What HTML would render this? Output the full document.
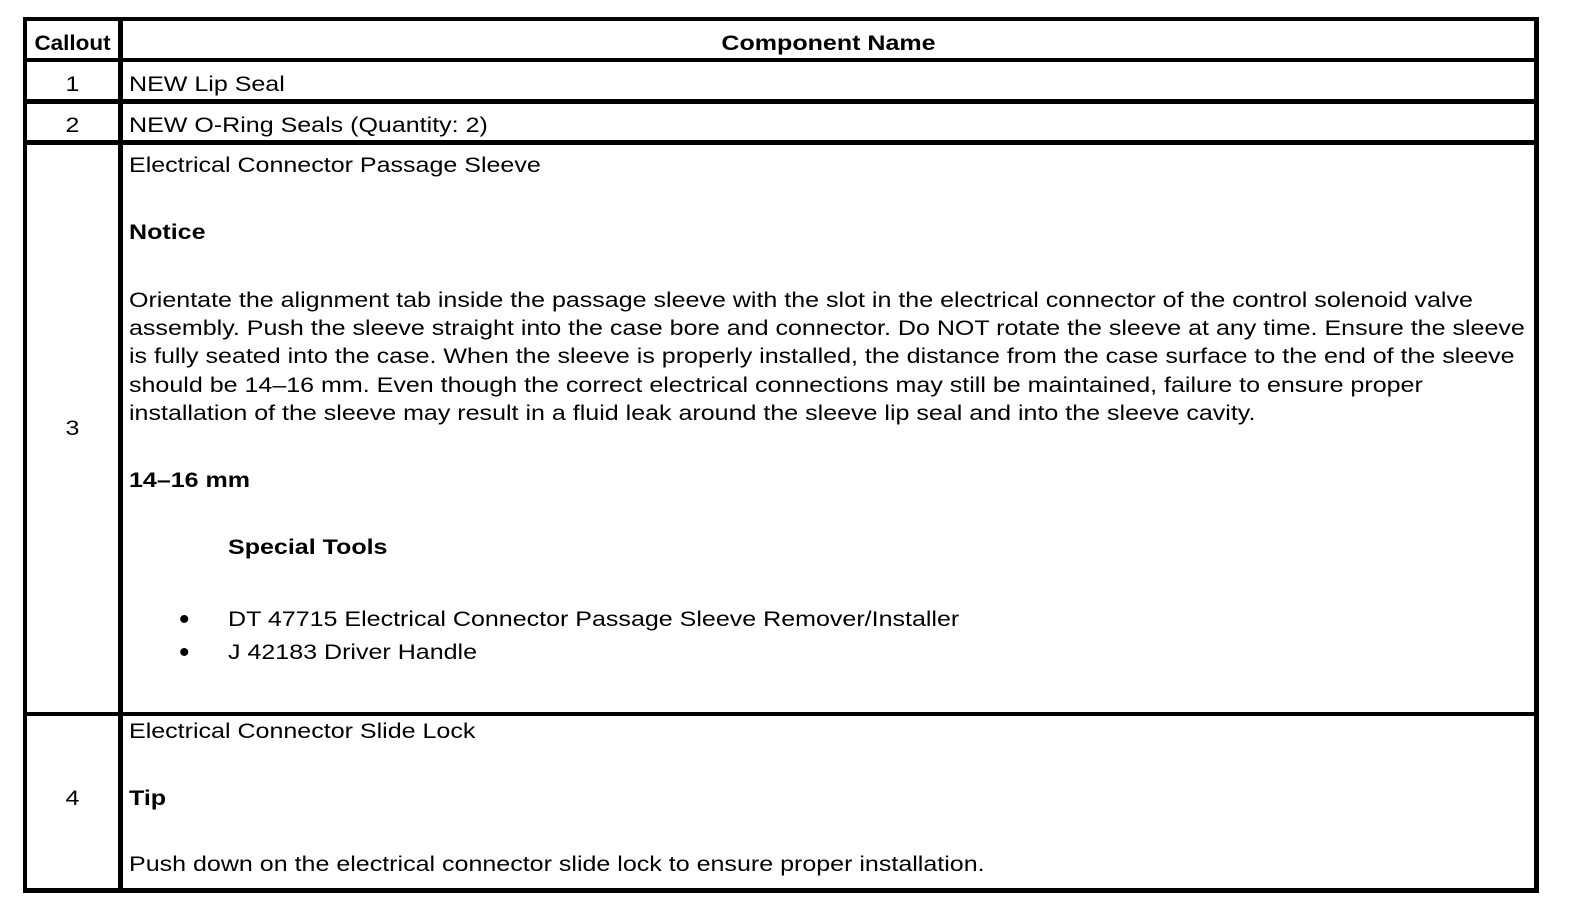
<!DOCTYPE html>
<html><head><meta charset="utf-8"><style>
body{margin:0;width:1584px;height:920px;background:#fff;position:relative;overflow:hidden;font-family:"Liberation Sans",Arial,sans-serif;font-size:21.4px;color:#000}
.l{position:absolute;background:#000}
.t{position:absolute;line-height:28px;white-space:nowrap;transform:scaleX(1.17);transform-origin:0 50%}
.c{transform-origin:50% 50%;text-align:center}
b{font-weight:bold}
</style></head><body>
<div class="l" style="left:23px;top:17px;width:1516px;height:4px"></div>
<div class="l" style="left:23px;top:58px;width:1516px;height:4px"></div>
<div class="l" style="left:23px;top:99px;width:1516px;height:5px"></div>
<div class="l" style="left:23px;top:140px;width:1516px;height:5px"></div>
<div class="l" style="left:23px;top:712px;width:1516px;height:4px"></div>
<div class="l" style="left:23px;top:888px;width:1516px;height:5px"></div>
<div class="l" style="left:23px;top:17px;width:4px;height:876px"></div>
<div class="l" style="left:118px;top:17px;width:5px;height:876px"></div>
<div class="l" style="left:1534px;top:17px;width:5px;height:876px"></div>

<div class="t c" style="left:27px;width:91px;top:29px;transform:scaleX(1.05)"><b>Callout</b></div>
<div class="t c" style="left:123px;width:1411px;top:29px"><b>Component Name</b></div>
<div class="t c" style="left:27px;width:91px;top:70px">1</div>
<div class="t" style="left:129px;top:70px">NEW Lip Seal</div>
<div class="t c" style="left:27px;width:91px;top:111px">2</div>
<div class="t" style="left:129px;top:111px">NEW O-Ring Seals (Quantity: 2)</div>
<div class="t c" style="left:27px;width:91px;top:414px">3</div>
<div class="t" style="left:129px;top:151px">Electrical Connector Passage Sleeve</div>
<div class="t" style="left:129px;top:218px"><b>Notice</b></div>
<div class="t" style="left:129px;top:286px">Orientate the alignment tab inside the passage sleeve with the slot in the electrical connector of the control solenoid valve</div>
<div class="t" style="left:129px;top:314px">assembly. Push the sleeve straight into the case bore and connector. Do NOT rotate the sleeve at any time. Ensure the sleeve</div>
<div class="t" style="left:129px;top:342px">is fully seated into the case. When the sleeve is properly installed, the distance from the case surface to the end of the sleeve</div>
<div class="t" style="left:129px;top:371px">should be 14–16 mm. Even though the correct electrical connections may still be maintained, failure to ensure proper</div>
<div class="t" style="left:129px;top:399px">installation of the sleeve may result in a fluid leak around the sleeve lip seal and into the sleeve cavity.</div>
<div class="t" style="left:129px;top:466px"><b>14–16 mm</b></div>
<div class="t" style="left:228px;top:533px"><b>Special Tools</b></div>
<div class="t" style="left:179px;top:605px;transform:scale(1.4)">•</div>
<div class="t" style="left:228px;top:605px">DT 47715 Electrical Connector Passage Sleeve Remover/Installer</div>
<div class="t" style="left:179px;top:638px;transform:scale(1.4)">•</div>
<div class="t" style="left:228px;top:638px">J 42183 Driver Handle</div>
<div class="t c" style="left:27px;width:91px;top:784px">4</div>
<div class="t" style="left:129px;top:717px">Electrical Connector Slide Lock</div>
<div class="t" style="left:129px;top:784px"><b>Tip</b></div>
<div class="t" style="left:129px;top:850px">Push down on the electrical connector slide lock to ensure proper installation.</div>
</body></html>
